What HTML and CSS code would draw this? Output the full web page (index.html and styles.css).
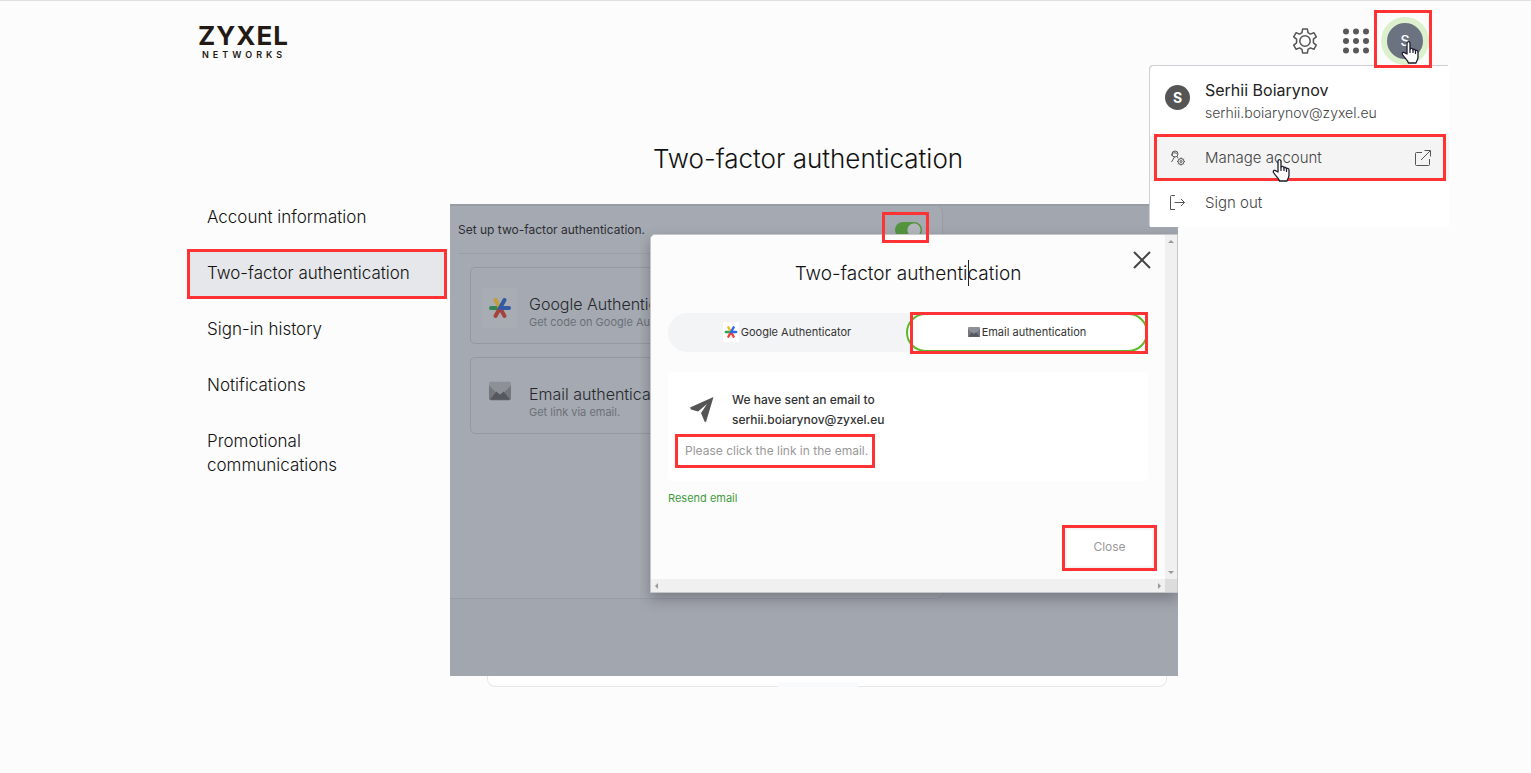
FILE: index.html
```
<!DOCTYPE html>
<html lang="en">
<head>
  <meta charset="utf-8">
  <title>Two-factor authentication - Zyxel Networks</title>
  <link rel="stylesheet" href="styles.css">
</head>
<body>
  <svg class="defs" width="0" height="0" aria-hidden="true">
    <symbol id="star" viewBox="0 0 24 24">
      <g stroke-width="4" stroke-linecap="round">
        <path d="M12 12H3" stroke="#1ea45a"/>
        <path d="M12 12L7.500 4" stroke="#f5b81c"/>
        <path d="M12 12L7.500 20M12 12L16.500 20" stroke="#e8453c"/>
        <path d="M21 12H12L16.500 4" stroke="#2b6be8" stroke-linejoin="round" fill="none"/>
      </g>
    </symbol>
    <symbol id="mail" viewBox="0 0 24 20">
      <rect width="24" height="20" rx="2" fill="#8d9096"/>
      <path d="M0 4L8 12L12 14L16 12L24 4V18a2 2 0 0 1-2 2H2a2 2 0 0 1-2-2z" fill="#74777d"/>
      <path d="M1 19.500L8 10.500L12 14L16 10.500L23 19.500z" fill="#55585e"/>
    </symbol>
    <symbol id="hand" viewBox="0 0 18 24">
      <path d="M6 14V3.500C6 1 9 1 9 3.500V9.500C9 8 12 8 12 10C12 8.700 14.500 9 14.500 11C14.500 10 17 10 17 12V17C17 20 15.500 21 15 23H7.500C7 20.500 3.500 18 1.500 14.500C.5 12.500 3 11.500 4.500 13.200z" fill="#fff" stroke="#1b1b2b" stroke-width="1.300" stroke-linejoin="round"/>
      <path d="M9 9.500V13M12 10V13M14.500 11V14" stroke="#1b1b2b" stroke-width="1.200"/>
    </symbol>
  </svg>

  <header class="header">
    <a class="logo" href="#">
      <span class="logo-name">ZYXEL</span>
      <span class="logo-sub">NETWORKS</span>
    </a>
    <div class="tools">
      <button class="icon-button" aria-label="Settings">
        <svg width="26" height="26" viewBox="0 0 26 26" fill="none" stroke="#555" stroke-width="1.500" stroke-linejoin="round">
          <path d="M10.600 1h4.800l.6 3.700 2.400 1.400 3.500-1.400 2.400 4.100-2.900 2.400v3.600l2.900 2.400-2.400 4.100-3.500-1.400-2.400 1.400-.6 3.700h-4.800l-.6-3.700-2.400-1.400-3.500 1.400-2.400-4.100 2.900-2.400v-3.600L1.700 8.800l2.400-4.100 3.500 1.400L10 4.700z"/>
          <circle cx="13" cy="13" r="5.200"/>
        </svg>
      </button>
      <button class="icon-button" aria-label="Apps">
        <svg width="26" height="26" viewBox="0 0 26 26" fill="#585858">
          <circle cx="3" cy="3.500" r="3"/><circle cx="13" cy="3.500" r="3"/><circle cx="23" cy="3.500" r="3"/>
          <circle cx="3" cy="13" r="3"/><circle cx="13" cy="13" r="3"/><circle cx="23" cy="13" r="3"/>
          <circle cx="3" cy="22.500" r="3"/><circle cx="13" cy="22.500" r="3"/><circle cx="23" cy="22.500" r="3"/>
        </svg>
      </button>
      <div class="account">
        <button class="avatar" aria-label="Account"><span>S</span></button>
        <svg class="hand hand-avatar" width="18" height="24"><use href="#hand"/></svg>
        <div class="menu">
          <div class="menu-user">
            <span class="initial">S</span>
            <div>
              <p class="user-name">Serhii Boiarynov</p>
              <p class="user-email">serhii.boiarynov@zyxel.eu</p>
            </div>
          </div>
          <a class="menu-item current" href="#">
            <svg width="16" height="16" viewBox="0 0 16 16" fill="none" stroke="#555">
              <circle cx="5" cy="4" r="3"/>
              <path d="M1.500 5.500C2 3 4 2 7 3.500M4.500 7L1.500 12M7 6.500L8 8"/>
              <circle cx="11" cy="11.500" r="3"/>
              <circle cx="11" cy="11.500" r="1"/>
              <path d="M11 7.500v1M11 14.500v1M7 11.500h1M14 11.500h1M8.200 8.700l.7.700M13.100 13.600l.7.700M13.800 8.700l-.7.700M8.900 13.600l-.7.700"/>
            </svg>
            <span>Manage account</span>
            <svg width="16" height="16" viewBox="0 0 16 16" fill="none" stroke="#555">
              <path d="M7 2.500H1.500a1 1 0 0 0-1 1v11a1 1 0 0 0 1 1h12a1 1 0 0 0 1-1V9M6 10L15 1M9.500.5h6v6"/>
            </svg>
            <svg class="hand hand-menu" width="18" height="24"><use href="#hand"/></svg>
          </a>
          <a class="menu-item" href="#">
            <svg width="16" height="16" viewBox="0 0 16 16" fill="none" stroke="#555">
              <path d="M5 .5H1.500a1 1 0 0 0-1 1v13h4.500M4.500 7.500h10M11 4l3.500 3.500L11 11"/>
            </svg>
            <span>Sign out</span>
          </a>
        </div>
      </div>
    </div>
  </header>

  <div class="page">
    <nav class="sidebar">
      <a href="#">Account information</a>
      <a class="active" href="#">Two-factor authentication</a>
      <a href="#">Sign-in history</a>
      <a href="#">Notifications</a>
      <a href="#">Promotional communications</a>
    </nav>

    <main>
      <h1>Two-factor authentication</h1>
      <section class="panel">
        <div class="settings">
          <div class="setup">
            <label for="two-factor">Set up two-factor authentication.</label>
            <span class="switch"><input type="checkbox" id="two-factor" checked></span>
          </div>
          <div class="option">
            <span class="option-icon tile"><svg width="24" height="24"><use href="#star"/></svg></span>
            <div>
              <h2>Google Authenticator</h2>
              <p>Get code on Google Authenticator.</p>
            </div>
          </div>
          <div class="option">
            <span class="option-icon"><svg width="22" height="20"><use href="#mail"/></svg></span>
            <div>
              <h2>Email authentication</h2>
              <p>Get link via email.</p>
            </div>
          </div>
        </div>

        <div class="modal" role="dialog" aria-labelledby="modal-title">
          <div class="modal-body">
            <button class="dismiss" aria-label="Dismiss">
              <svg width="18" height="20" viewBox="0 0 18 20" stroke="#444" stroke-width="2"><path d="M1 2L17 18M17 2L1 18"/></svg>
            </button>
            <h2 id="modal-title">Two-factor authenti<i class="caret"></i>cation</h2>
            <div class="tabs">
              <button class="tab"><span class="tab-icon"><svg width="14" height="14"><use href="#star"/></svg></span>Google Authenticator</button>
              <button class="tab selected"><svg width="12" height="10"><use href="#mail"/></svg>Email authentication</button>
            </div>
            <div class="message">
              <div class="sent">
                <svg width="24" height="26" viewBox="0 0 24 26" fill="#555"><path d="M23.500 0L0 10.500L1 12.500L8 14.500L17 7L11 16L14.500 24.500L16 25z"/></svg>
                <p>We have sent an email to<br>serhii.boiarynov@zyxel.eu</p>
              </div>
              <p class="hint">Please click the link in the email.</p>
            </div>
            <a class="resend" href="#">Resend email</a>
            <div class="actions"><button class="close">Close</button></div>
          </div>
          <div class="scroll-y"><i class="arrow up"></i><i class="arrow down"></i></div>
          <div class="scroll-x"><i class="arrow left"></i><i class="arrow right"></i></div>
          <div class="scroll-corner"></div>
        </div>
      </section>
      <div class="card-end"><span></span></div>
    </main>
  </div>
</body>
</html>
```
FILE: styles.css
```
* {
  box-sizing: border-box;
}
body {
  margin: 0;
  min-height: 100vh;
  border-top: 1px solid #e0e0e0;
  background-color: #fcfcfc;
  font-family: Inter, "Liberation Sans", sans-serif;
  font-weight: 300;
  color: #111;
}
h1, h2, p {
  margin: 0;
  font-weight: 300;
}
a {
  color: inherit;
  text-decoration: none;
}
button {
  padding: 0;
  border: none;
  background: none;
  font: inherit;
  color: inherit;
  cursor: pointer;
}
svg {
  display: block;
  flex: none;
}
.defs {
  position: absolute;
}

/* header */
.header {
  display: flex;
  justify-content: space-between;
  align-items: flex-start;
  padding: 9px 99px 0 198px;
}
.logo {
  display: flex;
  flex-direction: column;
  padding-top: 12px;
  color: #231a16;
}
.logo-name {
  font-size: 26px;
  line-height: 28px;
  font-weight: 700;
  letter-spacing: 1px;
}
.logo-sub {
  padding-left: 4px;
  font-size: 9px;
  line-height: 10px;
  font-weight: 600;
  letter-spacing: 4px;
}
.tools {
  display: flex;
  align-items: center;
}
.icon-button {
  margin: 4px 25px 0 0;
}
.icon-button + .icon-button {
  margin-right: 5px;
}
.account {
  position: relative;
  z-index: 10;
}
.avatar {
  position: relative;
  display: flex;
  justify-content: flex-end;
  align-items: flex-end;
  width: 58px;
  height: 58px;
  border: 3px solid #ff3333;
  z-index: 1;
}
.avatar span {
  width: 48px;
  height: 48px;
  border: 6px solid #dcf0cd;
  border-radius: 50%;
  background-color: #6b7280;
  color: #fff;
  font-size: 14px;
  line-height: 36px;
  font-weight: 500;
}
.hand {
  position: absolute;
  z-index: 3;
}
.hand-avatar {
  left: 27px;
  top: 30px;
}

/* account menu */
.menu {
  position: absolute;
  top: 56px;
  right: -17px;
  width: 299px;
  padding-bottom: 1px;
  border-radius: 4px 0 0 0;
  background-color: #fff;
  box-shadow: -1px -1px 0 #d0d0d6;
  color: #444;
}
.menu-user {
  display: flex;
  gap: 15px;
  height: 70px;
  padding: 14px 15px 0;
}
.initial {
  width: 25px;
  height: 25px;
  margin-top: 5px;
  border-radius: 50%;
  background-color: #555;
  color: #fff;
  font-size: 14px;
  line-height: 25px;
  font-weight: 700;
  text-align: center;
}
.user-name {
  color: #222;
  font-size: 16px;
  line-height: 20px;
  font-weight: 400;
}
.user-email {
  font-size: 14px;
  line-height: 26px;
}
.menu-item {
  position: relative;
  display: flex;
  align-items: center;
  gap: 19px;
  height: 45px;
  padding: 0 18px 2px 20px;
  font-size: 15px;
}
.menu-item span {
  flex: 1;
}
.current {
  background-color: #f4f4f4;
}
.current::after {
  content: "";
  position: absolute;
  inset: -2px 3px 0 4px;
  border: 3px solid #ff3333;
}
.hand-menu {
  left: 122px;
  top: 22px;
}

/* page */
.page {
  display: grid;
  grid-template-columns: 260px minmax(0, 1fr);
  gap: 3px;
  padding: 0 353px 0 187px;
}
.sidebar {
  display: flex;
  flex-direction: column;
  gap: 6px;
  padding-top: 125px;
}
.sidebar a {
  padding: 12px 60px 14px 20px;
  font-size: 17px;
  line-height: 24px;
}
.sidebar .active {
  padding: 9px 0 11px 17px;
  border: 3px solid #ff3333;
  background-color: #e5e7eb;
}
h1 {
  padding: 75px 12px 29px 0;
  font-size: 26px;
  line-height: 32px;
  text-align: center;
}
.panel {
  position: relative;
  height: 472px;
  border-top: 2px solid #989ca5;
  background-color: #a2a6af;
}
.settings {
  width: 493px;
  height: 393px;
  border-right: 1px solid #999da5;
  border-bottom: 1px solid #999da5;
  border-radius: 0 6px 6px 0;
  background-color: #a5a9b1;
}
.setup {
  display: flex;
  justify-content: space-between;
  align-items: center;
  height: 48px;
  margin-left: 8px;
  padding-right: 20px;
  border-bottom: 1px solid #9b9fa7;
  color: #2d2f34;
  font-size: 12px;
  font-weight: 400;
}
.switch {
  position: relative;
}
.switch::after {
  content: "";
  position: absolute;
  inset: -10px -7px -5px -13px;
  border: 3px solid #ff3333;
  z-index: 3;
}
.switch input {
  display: block;
  appearance: none;
  width: 27px;
  height: 16px;
  margin: 0;
  border-radius: 8px;
  background: radial-gradient(circle at 19px 8px, #b3b6bb 6px, #55953f 7px);
}
.option {
  display: flex;
  gap: 12px;
  height: 77px;
  margin: 13px 20px;
  padding: 20px 11px;
  border: 1px solid #94989f;
  border-radius: 5px;
}
.option-icon {
  display: flex;
  justify-content: center;
  width: 35px;
  height: 40px;
  padding-top: 3px;
}
.tile {
  align-items: center;
  padding: 0;
  background-color: #a8acb3;
}
.tile svg {
  filter: saturate(0.7) brightness(0.85);
}
.option h2 {
  padding-top: 6px;
  color: #26282c;
  font-size: 16px;
  line-height: 20px;
  white-space: nowrap;
}
.option p {
  color: #6c7078;
  font-size: 11px;
  line-height: 16px;
  font-weight: 400;
  white-space: nowrap;
}

/* modal */
.modal {
  position: absolute;
  top: 28px;
  right: 0;
  display: grid;
  grid-template-columns: 1fr 12px;
  grid-template-rows: 1fr 13px;
  width: 528px;
  border: 1px solid #c4c6ca;
  border-radius: 5px 0 0 0;
  background-color: #fcfcfc;
  box-shadow: 0 6px 14px rgba(40, 44, 52, 0.35);
  clip-path: inset(-10px 0 -30px -10px);
  z-index: 2;
}
.modal-body {
  position: relative;
  padding: 25px 17px 8px;
}
.dismiss {
  position: absolute;
  top: 15px;
  right: 14px;
}
.modal h2 {
  font-size: 19px;
  line-height: 28px;
  text-align: center;
}
.caret {
  position: absolute;
  width: 1px;
  height: 26px;
  background-color: #222;
}
.tabs {
  display: flex;
  margin-top: 25px;
  border-radius: 20px;
  background-color: #f3f4f6;
}
.tab {
  flex: 1;
  display: flex;
  justify-content: center;
  align-items: center;
  gap: 2px;
  height: 39px;
  padding-bottom: 2px;
  color: #333;
  font-size: 11px;
  font-weight: 400;
}
.tab-icon {
  padding: 3px 1px;
  background-color: #fff;
}
.selected {
  position: relative;
  border: 2px solid #5dba2b;
  border-radius: 20px;
  background-color: #fff;
}
.selected::after {
  content: "";
  position: absolute;
  inset: -3px -2px -4px 2px;
  border: 3px solid #ff3333;
}
.message {
  margin-top: 20px;
  padding: 18px 7px 13px;
  border-radius: 6px;
  background-color: #fff;
}
.sent {
  display: flex;
  align-items: center;
  gap: 18px;
  padding-left: 15px;
  color: #333;
  font-size: 12px;
  line-height: 20px;
}
.sent p {
  font-weight: 500;
}
.hint {
  width: fit-content;
  margin-top: 4px;
  padding: 0 4px 0 7px;
  border: 3px solid #ff3333;
  color: #999;
  font-size: 12px;
  line-height: 28px;
  font-weight: 400;
}
.resend {
  display: block;
  width: fit-content;
  margin-top: 9px;
  color: #3f9b3f;
  font-size: 11px;
  line-height: 16px;
  font-weight: 400;
}
.actions {
  display: flex;
  justify-content: flex-end;
  margin: 19px -9px 0 0;
}
.close {
  width: 95px;
  height: 46px;
  padding-bottom: 3px;
  border: 3px solid #ff3333;
  background-color: #fff;
  box-shadow: inset 0 0 0 2px #f4f4f5;
  color: #999;
  font-size: 12px;
  font-weight: 400;
}
.scroll-y, .scroll-x {
  display: flex;
  justify-content: space-between;
  align-items: center;
  background-color: #f0f0f0;
}
.scroll-y {
  flex-direction: column;
  padding: 5px 0;
}
.scroll-x {
  padding: 0 4px;
}
.scroll-corner {
  background-color: #dcdcdc;
}
.arrow {
  border: 3px solid transparent;
}
.up {
  border-top: none;
  border-bottom-color: #999;
}
.down {
  border-bottom: none;
  border-top-color: #999;
}
.left {
  border-left: none;
  border-right-color: #999;
}
.right {
  border-right: none;
  border-left-color: #999;
}

/* bottom edge of the card behind the panel */
.card-end {
  display: flex;
  justify-content: center;
  align-items: flex-end;
  height: 11px;
  margin: 0 11px 0 37px;
  border: 1px solid #e5e7eb;
  border-top: none;
  border-radius: 0 0 8px 8px;
  background-color: #fff;
}
.card-end span {
  width: 80px;
  height: 5px;
  margin: 0 18px -1px 0;
  background-color: #f9fafc;
}
```
